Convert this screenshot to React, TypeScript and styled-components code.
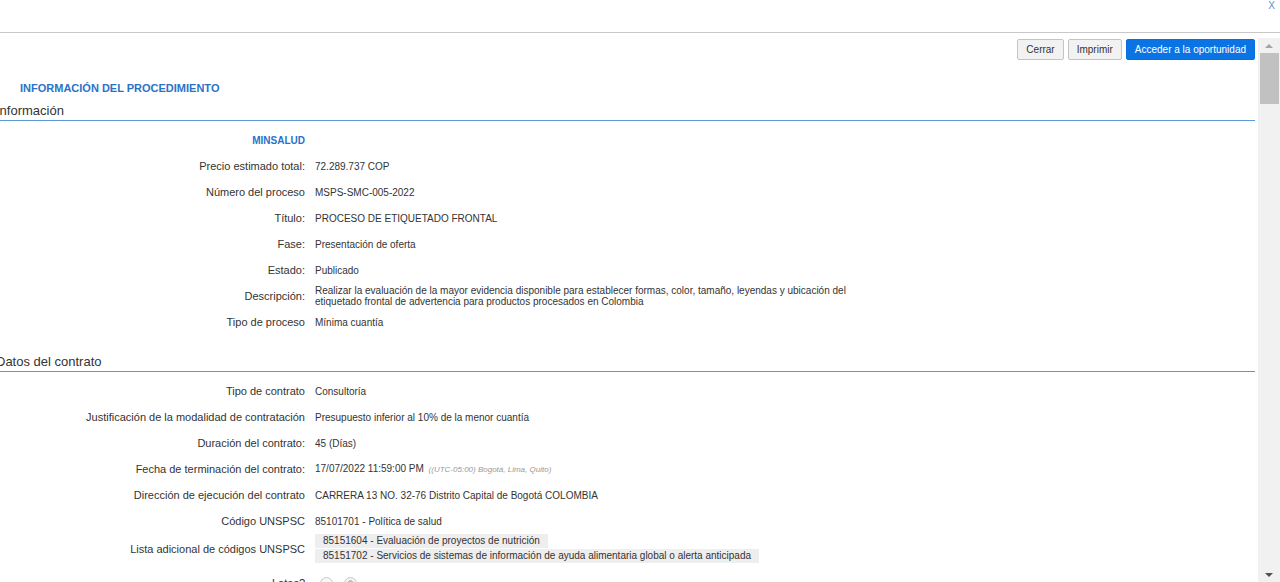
import styled, { createGlobalStyle } from "styled-components";

const GlobalStyle = createGlobalStyle`
    html, body {
        margin: 0;
        padding: 0;
        background: #ffffff;
        font-family: "Liberation Sans", Arial, sans-serif;
        color: #333333;
        overflow: hidden;
    }
`;

const Page = styled.div`
    width: 1280px;
    height: 582px;
    display: flex;
    flex-direction: column;
    overflow: hidden;
`;

const TopBar = styled.div`
    height: 32px;
    flex: none;
    border-bottom: 1px solid #c8c8c8;
    display: flex;
    justify-content: flex-end;
    align-items: flex-start;
    padding-right: 5px;
`;

const CloseX = styled.span`
    font-size: 10px;
    color: #5b8fd6;
`;

const Body = styled.div`
    flex: 1;
    display: flex;
    min-height: 0;
`;

const Main = styled.div`
    flex: 1;
    padding: 6px 3px 0 0;
    overflow: hidden;
`;

const Toolbar = styled.div`
    display: flex;
    justify-content: flex-end;
    gap: 4px;
`;

const Button = styled.button<{ primary?: boolean }>`
    height: 21px;
    padding: 0 8px;
    font-family: "Liberation Sans", Arial, sans-serif;
    font-size: 10px;
    border-radius: 2px;
    cursor: pointer;
    border: 1px solid ${(p) => (p.primary ? "#0a6fde" : "#c4c4c4")};
    background: ${(p) => (p.primary ? "#0b74e5" : "#f2f2f2")};
    color: ${(p) => (p.primary ? "#ffffff" : "#333333")};
`;

const PageTitle = styled.div`
    margin: 22px 0 0 20px;
    font-size: 11px;
    font-weight: bold;
    color: #2a72c8;
`;

const SectionTitle = styled.div<{ gap: number }>`
    margin: ${(p) => p.gap}px 0 0 -4px;
    font-size: 13px;
    color: #333333;
    line-height: 16px;
    padding-bottom: 1px;
    border-bottom: 1px solid #5b9bd5;
`;

const Grid = styled.div<{ gap: number }>`
    margin-top: ${(p) => p.gap}px;
    display: grid;
    grid-template-columns: 305px 1fr;
    column-gap: 10px;
    align-items: center;
    font-size: 10px;
`;

const Label = styled.div<{ strong?: boolean; pushed?: boolean }>`
    text-align: right;
    font-size: ${(p) => (p.strong ? "10px" : "11px")};
    color: ${(p) => (p.strong ? "#2a72c8" : "#333333")};
    font-weight: ${(p) => (p.strong ? "bold" : "normal")};
    min-height: 26px;
    margin-top: ${(p) => (p.pushed ? "7px" : "0")};
    display: flex;
    align-items: center;
    justify-content: flex-end;
`;

const Value = styled.div<{ wide?: number }>`
    max-width: ${(p) => (p.wide ? `${p.wide}px` : "none")};
    line-height: 11px;
`;

const Zone = styled.span`
    font-size: 8px;
    font-style: italic;
    color: #999999;
    margin-left: 2px;
`;

const CodeList = styled.div`
    display: flex;
    flex-direction: column;
    align-items: flex-start;
    gap: 1px;
`;

const Code = styled.span`
    background: #eeeeee;
    padding: 1px 8px;
    line-height: 12px;
`;

const Radios = styled.div`
    display: flex;
    align-items: center;
    gap: 4px;
    padding-left: 5px;
    margin-top: 7px;
`;

const Radio = styled.span<{ checked?: boolean }>`
    width: 11px;
    height: 11px;
    border-radius: 50%;
    border: 1px solid #c8c8c8;
    background: ${(p) => (p.checked ? "radial-gradient(circle, #bdbdbd 0 3px, #f4f4f4 3.5px)" : "#f8f8f8")};
`;

const Scrollbar = styled.div`
    width: 22px;
    flex: none;
    margin-top: 5px;
    background: #f1f1f1;
    display: flex;
    flex-direction: column;
    align-items: center;
`;

const Arrow = styled.div<{ down?: boolean }>`
    width: 0;
    height: 0;
    margin: 6px 0 5px;
    border-left: 4px solid transparent;
    border-right: 4px solid transparent;
    ${(p) => (p.down ? "border-top: 4px solid #505050;" : "border-bottom: 4px solid #a3a3a3;")}
`;

const Thumb = styled.div`
    width: 19px;
    height: 51px;
    background: #c1c1c1;
`;

const Spacer = styled.div`
    flex: 1;
`;

const infoRows: [string, string][] = [
    ["Precio estimado total:", "72.289.737 COP"],
    ["Número del proceso", "MSPS-SMC-005-2022"],
    ["Título:", "PROCESO DE ETIQUETADO FRONTAL"],
    ["Fase:", "Presentación de oferta"],
    ["Estado:", "Publicado"],
];

const App = () => {
    return (
        <Page>
            <GlobalStyle />
            <TopBar>
                <CloseX>X</CloseX>
            </TopBar>
            <Body>
                <Main>
                    <Toolbar>
                        <Button>Cerrar</Button>
                        <Button>Imprimir</Button>
                        <Button primary>Acceder a la oportunidad</Button>
                    </Toolbar>
                    <PageTitle>INFORMACIÓN DEL PROCEDIMIENTO</PageTitle>
                    <SectionTitle gap={9}>Información</SectionTitle>
                    <Grid gap={6}>
                        <Label strong>MINSALUD</Label>
                        <div />
                        {infoRows.map(([label, value]) => (
                            <>
                                <Label key={label}>{label}</Label>
                                <Value>{value}</Value>
                            </>
                        ))}
                        <Label>Descripción:</Label>
                        <Value wide={545}>
                            Realizar la evaluación de la mayor evidencia disponible para establecer formas, color, tamaño, leyendas y ubicación del etiquetado frontal de advertencia para productos procesados en Colombia
                        </Value>
                        <Label>Tipo de proceso</Label>
                        <Value>Mínima cuantía</Value>
                    </Grid>
                    <SectionTitle gap={19}>Datos del contrato</SectionTitle>
                    <Grid gap={6}>
                        <Label>Tipo de contrato</Label>
                        <Value>Consultoría</Value>
                        <Label>Justificación de la modalidad de contratación</Label>
                        <Value>Presupuesto inferior al 10% de la menor cuantía</Value>
                        <Label>Duración del contrato:</Label>
                        <Value>45 (Días)</Value>
                        <Label>Fecha de terminación del contrato:</Label>
                        <Value>
                            17/07/2022 11:59:00 PM <Zone>((UTC-05:00) Bogotá, Lima, Quito)</Zone>
                        </Value>
                        <Label>Dirección de ejecución del contrato</Label>
                        <Value>CARRERA 13 NO. 32-76 Distrito Capital de Bogotá COLOMBIA</Value>
                        <Label>Código UNSPSC</Label>
                        <Value>85101701 - Política de salud</Value>
                        <Label>Lista adicional de códigos UNSPSC</Label>
                        <CodeList>
                            <Code>85151604 - Evaluación de proyectos de nutrición</Code>
                            <Code>85151702 - Servicios de sistemas de información de ayuda alimentaria global o alerta anticipada</Code>
                        </CodeList>
                        <Label pushed>Lotes?</Label>
                        <Radios>
                            <Radio />
                            <span>-</span>
                            <Radio checked />
                        </Radios>
                    </Grid>
                </Main>
                <Scrollbar>
                    <Arrow />
                    <Thumb />
                    <Spacer />
                    <Arrow down />
                </Scrollbar>
            </Body>
        </Page>
    );
};

export default App;
